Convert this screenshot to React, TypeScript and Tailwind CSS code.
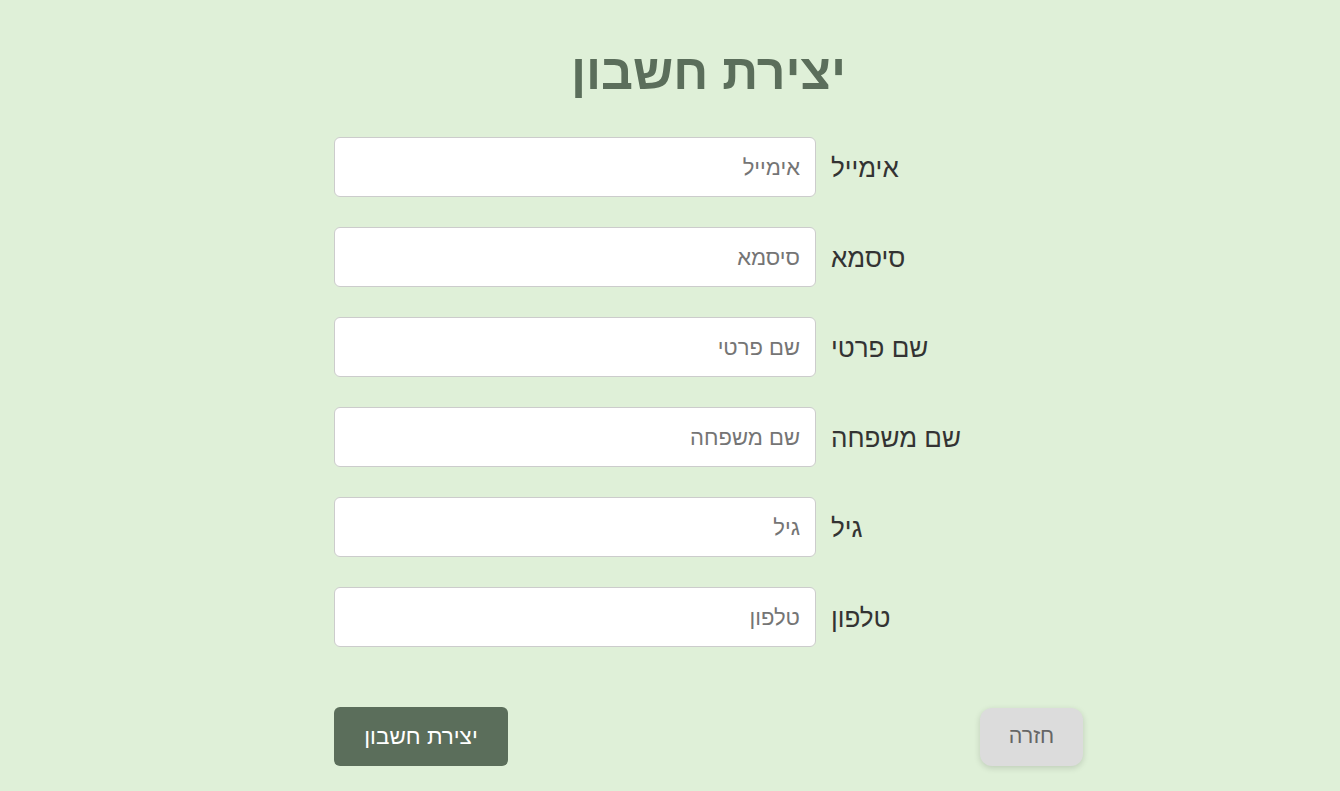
const fields = [
  { label: 'אימייל', placeholder: 'אימייל', type: 'email' },
  { label: 'סיסמא', placeholder: 'סיסמא', type: 'password' },
  { label: 'שם פרטי', placeholder: 'שם פרטי', type: 'text' },
  { label: 'שם משפחה', placeholder: 'שם משפחה', type: 'text' },
  { label: 'גיל', placeholder: 'גיל', type: 'number' },
  { label: 'טלפון', placeholder: 'טלפון', type: 'tel' },
];

function App() {
  return (
    <div className="min-h-[791px] bg-[#dff0d8] font-['Liberation_Sans','Open_Sans','DejaVu_Sans',sans-serif] text-[#333]">
      <div className="ml-[334px] flex w-[749px] flex-col pt-[40px]">
        <h1
          dir="rtl"
          className="text-center text-[50px] font-bold leading-[64px] text-[#5b6e5b]"
        >
          יצירת חשבון
        </h1>

        <div className="mt-[33px] flex flex-col gap-[30px]">
          {fields.map((f) => (
            <div key={f.label} className="flex items-center gap-[15px]">
              <input
                dir="rtl"
                type={f.type}
                placeholder={f.placeholder}
                className="h-[60px] w-[482px] rounded-[6px] border border-[#ccc] bg-white px-[15px] pt-[2px] text-[22px] text-[#333] placeholder:text-[#757575] focus:outline-none"
              />
              <label dir="rtl" className="pt-[3px] text-[26px] text-[#333]">
                {f.label}
              </label>
            </div>
          ))}
        </div>

        <div className="mt-[60px] flex items-center justify-between">
          <button
            type="button"
            dir="rtl"
            className="h-[59px] w-[174px] rounded-[6px] bg-[#5b6e5b] text-[22.5px] text-white"
          >
            יצירת חשבון
          </button>
          <button
            type="button"
            dir="rtl"
            className="h-[58px] w-[103px] rounded-[12px] bg-[#dcdcdc] text-[21.5px] text-[#666] shadow-[0_2px_6px_rgba(0,0,0,0.15)]"
          >
            חזרה
          </button>
        </div>
      </div>
    </div>
  );
}

export default App;
